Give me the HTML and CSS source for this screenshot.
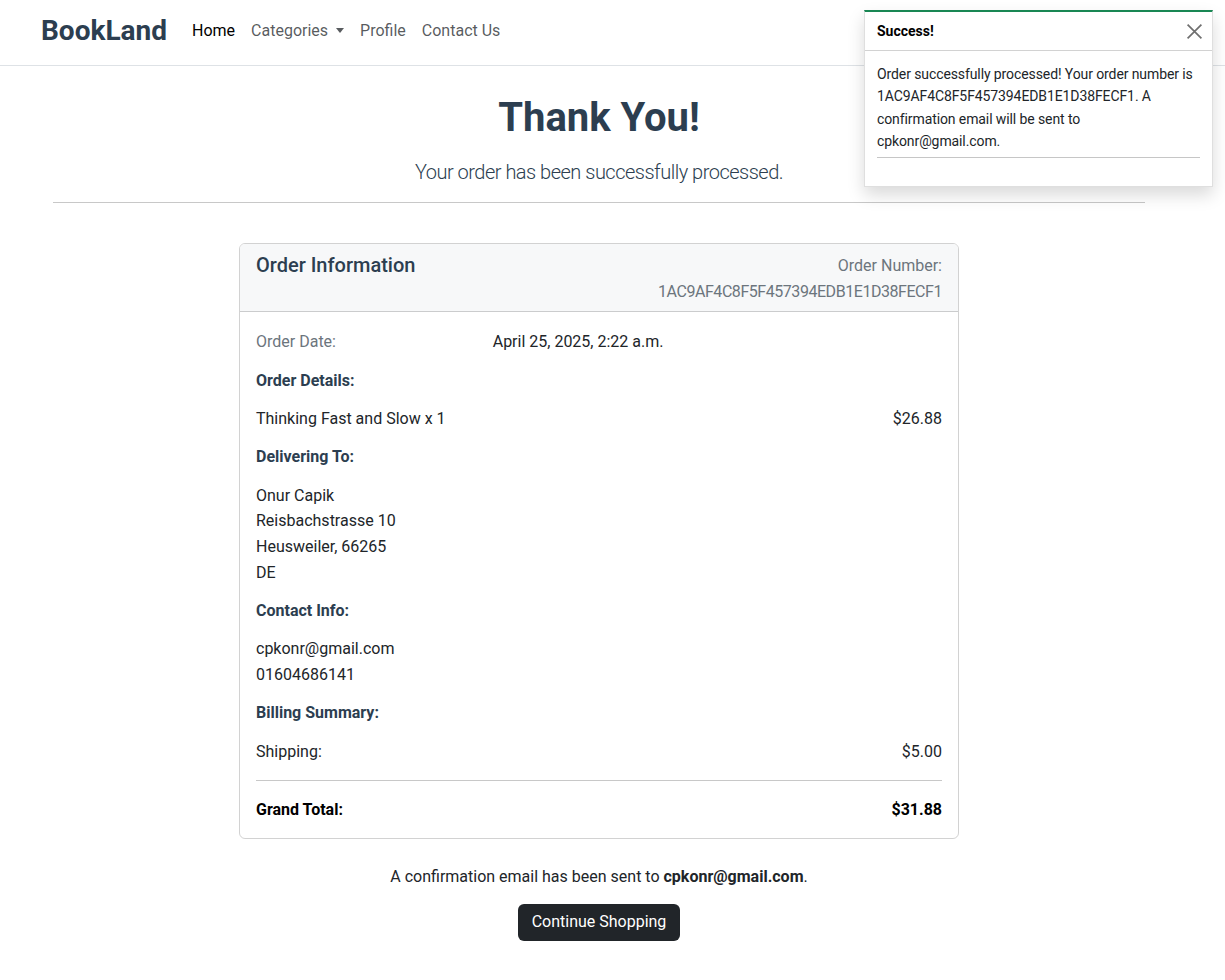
FILE: index.html
```html
<!DOCTYPE html>
<html lang="en">
<head>
<meta charset="utf-8">
<title>BookLand - Thank You</title>
<link rel="stylesheet" href="styles.css">
</head>
<body>
<nav class="navbar">
  <a class="brand" href="#">BookLand</a>
  <ul class="nav-links">
    <li><a class="nav-link active" href="#">Home</a></li>
    <li><a class="nav-link dropdown" href="#">Categories<span class="caret"></span></a></li>
    <li><a class="nav-link" href="#">Profile</a></li>
    <li><a class="nav-link" href="#">Contact Us</a></li>
  </ul>
</nav>

<div class="toast">
  <div class="toast-header">
    <strong>Success!</strong>
    <button class="btn-close" aria-label="Close">
      <svg width="14" height="14" viewBox="0 0 16 16"><path d="M1.5 1.5 L14.5 14.5 M14.5 1.5 L1.5 14.5" stroke="currentColor" stroke-width="1.6" fill="none"/></svg>
    </button>
  </div>
  <div class="toast-body">
    <p>Order successfully processed! Your order number is 1AC9AF4C8F5F457394EDB1E1D38FECF1. A confirmation email will be sent to cpkonr@gmail.com.</p>
    <hr class="toast-hr">
  </div>
</div>

<main class="page">
  <h1 class="title">Thank You!</h1>
  <p class="lead">Your order has been successfully processed.</p>
  <hr class="divider">

  <section class="card">
    <div class="card-header">
      <h5 class="card-title">Order Information</h5>
      <div class="order-number">
        <div>Order Number:</div>
        <div class="order-code">1AC9AF4C8F5F457394EDB1E1D38FECF1</div>
      </div>
    </div>
    <div class="card-body">
      <div class="info-row">
        <span class="muted">Order Date:</span>
        <span>April 25, 2025, 2:22 a.m.</span>
      </div>
      <h6 class="section-title">Order Details:</h6>
      <div class="price-row">
        <span>Thinking Fast and Slow x 1</span>
        <span>$26.88</span>
      </div>
      <h6 class="section-title">Delivering To:</h6>
      <p class="block">Onur Capik<br>Reisbachstrasse 10<br>Heusweiler, 66265<br>DE</p>
      <h6 class="section-title">Contact Info:</h6>
      <p class="block">cpkonr@gmail.com<br>01604686141</p>
      <h6 class="section-title">Billing Summary:</h6>
      <div class="price-row last">
        <span>Shipping:</span>
        <span>$5.00</span>
      </div>
      <hr class="card-hr">
      <div class="price-row total">
        <span>Grand Total:</span>
        <span>$31.88</span>
      </div>
    </div>
  </section>

  <p class="confirm">A confirmation email has been sent to <strong>cpkonr@gmail.com</strong>.</p>
  <div class="actions">
    <a class="btn-dark" href="#">Continue Shopping</a>
  </div>
</main>
</body>
</html>
```

FILE: styles.css
```css
* { box-sizing: border-box; }

body {
  margin: 0;
  font-family: Roboto, "Noto Sans", "Liberation Sans", sans-serif;
  font-size: 16px;
  line-height: 1.6;
  color: #212529;
  background: #fff;
}

a { text-decoration: none; }

/* Navbar */
.navbar {
  height: 66px;
  border-bottom: 1px solid #dee2e6;
  display: flex;
  align-items: center;
  padding-left: 41px;
  background: #fff;
}
.brand {
  font-size: 28px;
  font-weight: 700;
  color: #2c3e50;
  line-height: 1.2;
  margin-right: 17px;
  margin-top: -4px;
}
.nav-links {
  list-style: none;
  display: flex;
  margin: 0;
  padding: 0;
  margin-top: -4px;
}
.nav-link {
  display: block;
  padding: 8px 8px;
  color: rgba(33, 37, 41, 0.75);
}
.nav-link.active { color: #000; }
.caret {
  display: inline-block;
  margin-left: 8px;
  vertical-align: 3px;
  border-top: 5px solid;
  border-left: 4.5px solid transparent;
  border-right: 4.5px solid transparent;
}

/* Toast */
.toast {
  position: absolute;
  top: 10px;
  right: 12px;
  width: 349px;
  background: #fff;
  border: 1px solid rgba(0, 0, 0, 0.12);
  border-top: 2px solid #198754;
  box-shadow: 0 0.5rem 1rem rgba(0, 0, 0, 0.15);
  font-size: 14px;
  line-height: 1.6;
}
.toast-header {
  display: flex;
  align-items: center;
  justify-content: space-between;
  padding: 8px 12px;
  height: 39px;
  border-bottom: 1px solid rgba(0, 0, 0, 0.175);
  color: #000;
}
.toast-header strong { font-weight: 700; }
.btn-close {
  border: 0;
  background: transparent;
  padding: 0;
  margin-right: -3px;
  color: #6f6f6f;
  display: flex;
  cursor: pointer;
}
.btn-close svg { width: 17px; height: 17px; }
.toast-body {
  padding: 12px 12px 12px;
}
.toast-body p { margin: 0; color: #212529; letter-spacing: -0.1px; }
.toast-hr {
  border: 0;
  border-top: 1px solid #c6c6c6;
  margin: 4px 0 16px;
}

/* Page */
.page {
  width: 1092px;
  margin-left: 53px;
  padding-top: 28px;
  padding-bottom: 40px;
}
.title {
  text-align: center;
  font-size: 40px;
  font-weight: 700;
  line-height: 1.2;
  color: #2c3e50;
  margin: 0 0 14px;
}
.lead {
  text-align: center;
  font-size: 20px;
  font-weight: 300;
  line-height: 1.6;
  color: #2c3e50;
  letter-spacing: -0.5px;
  margin: 0 0 14px;
}
.divider {
  border: 0;
  border-top: 1px solid #c8c8c8;
  margin: 0 0 40px;
}

/* Card */
.card {
  width: 720px;
  margin: 0 auto;
  border: 1px solid rgba(0, 0, 0, 0.175);
  border-radius: 6px;
  overflow: hidden;
}
.card-header {
  display: flex;
  justify-content: space-between;
  align-items: flex-start;
  padding: 9px 16px 7px;
  background: #f7f8f9;
  border-bottom: 1px solid rgba(0, 0, 0, 0.175);
}
.card-title {
  margin: 0;
  font-size: 20px;
  font-weight: 500;
  line-height: 1.28;
  color: #2c3e50;
}
.order-number {
  text-align: right;
  color: #6c757d;
}
.order-code { letter-spacing: -0.45px; }
.card-body {
  padding: 17px 16px 15px;
}
.info-row {
  display: grid;
  grid-template-columns: 236.7px 1fr;
  margin-bottom: 12.8px;
}
.muted { color: #6c757d; }
.section-title {
  font-size: 16px;
  font-weight: 700;
  line-height: 1.6;
  color: #2c3e50;
  margin: 0 0 12.8px;
}
.price-row {
  display: flex;
  justify-content: space-between;
  margin-bottom: 12.8px;
}
.price-row.last { margin-bottom: 0; }
.price-row.total { margin-bottom: 0; font-weight: 700; color: #000; }
.block { margin: 0 0 12.8px; }
.card-hr {
  border: 0;
  border-top: 1px solid #c8c8c8;
  margin: 16px 0;
}

.confirm {
  text-align: center;
  margin: 25px 0 15px;
}
.confirm strong { font-weight: 700; }
.actions {
  display: flex;
  justify-content: center;
}
.btn-dark {
  display: inline-block;
  background: #212529;
  color: #fff;
  padding: 6px 14px;
  border-radius: 6px;
  line-height: 1.55;
  font-size: 16px;
}
```
